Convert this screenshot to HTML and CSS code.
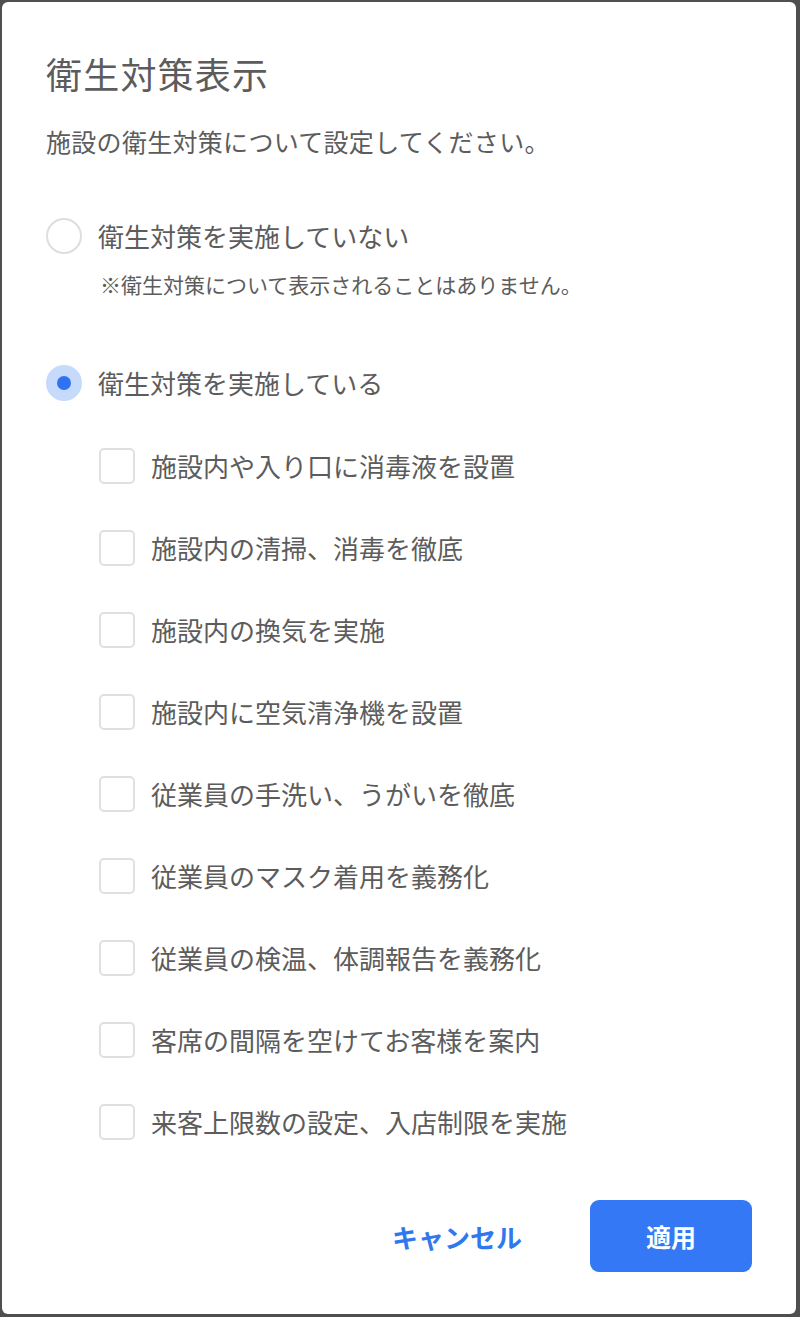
FILE: index.html
```html
<!DOCTYPE html>
<html lang="ja">
<head>
<meta charset="utf-8">
<title>衛生対策表示</title>
<link rel="stylesheet" href="styles.css">
</head>
<body>
<div class="dialog">
  <h1 class="title">衛生対策表示</h1>
  <p class="subtitle">施設の衛生対策について設定してください。</p>

  <div class="radio-row">
    <span class="radio"></span>
    <span class="label">衛生対策を実施していない</span>
  </div>
  <p class="note">※衛生対策について表示されることはありません。</p>

  <div class="radio-row radio-row-2">
    <span class="radio checked"><span class="dot"></span></span>
    <span class="label">衛生対策を実施している</span>
  </div>

  <ul class="checks">
    <li class="check-row"><span class="box"></span><span class="label">施設内や入り口に消毒液を設置</span></li>
    <li class="check-row"><span class="box"></span><span class="label">施設内の清掃、消毒を徹底</span></li>
    <li class="check-row"><span class="box"></span><span class="label">施設内の換気を実施</span></li>
    <li class="check-row"><span class="box"></span><span class="label">施設内に空気清浄機を設置</span></li>
    <li class="check-row"><span class="box"></span><span class="label">従業員の手洗い、うがいを徹底</span></li>
    <li class="check-row"><span class="box"></span><span class="label">従業員のマスク着用を義務化</span></li>
    <li class="check-row"><span class="box"></span><span class="label">従業員の検温、体調報告を義務化</span></li>
    <li class="check-row"><span class="box"></span><span class="label">客席の間隔を空けてお客様を案内</span></li>
    <li class="check-row"><span class="box"></span><span class="label">来客上限数の設定、入店制限を実施</span></li>
  </ul>

  <div class="actions">
    <button class="btn-cancel">キャンセル</button>
    <button class="btn-apply">適用</button>
  </div>
</div>
</body>
</html>
```

FILE: styles.css
```css
* { box-sizing: border-box; }
html, body {
  margin: 0;
  padding: 0;
  background: #4f4f4f;
}
body {
  font-family: "Noto Sans CJK JP", "Noto Sans", sans-serif;
  color: #5c5c5c;
}
.dialog {
  margin: 2px;
  width: 794px;
  height: 1312px;
  background: #ffffff;
  border-radius: 6px;
  padding: 49px 44px 0 44px;
}
.title {
  margin: 0;
  font-size: 36px;
  line-height: 44px;
  font-weight: 400;
  letter-spacing: 1.2px;
}
.subtitle {
  margin: 28px 0 0 0;
  font-size: 25px;
  line-height: 36px;
  letter-spacing: 0.3px;
}
.radio-row {
  display: flex;
  align-items: center;
  gap: 16px;
  height: 36px;
  margin-top: 59px;
}
.radio-row-2 {
  margin-top: 66px;
}
.radio {
  width: 36px;
  height: 36px;
  flex: none;
  border-radius: 50%;
  border: 2px solid #dedede;
  display: flex;
  align-items: center;
  justify-content: center;
}
.radio.checked {
  border: none;
  background: #c6dafc;
}
.dot {
  width: 14px;
  height: 14px;
  border-radius: 50%;
  background: #2f72f2;
}
.label {
  font-size: 26px;
  line-height: 36px;
}
.note {
  margin: 15px 0 0 54px;
  font-size: 21px;
  line-height: 30px;
}
.checks {
  list-style: none;
  margin: 47px 0 0 53px;
  padding: 0;
  display: flex;
  flex-direction: column;
  gap: 46px;
}
.check-row {
  display: flex;
  align-items: center;
  gap: 16px;
  height: 36px;
}
.box {
  width: 36px;
  height: 36px;
  flex: none;
  border: 2px solid #e0e0e0;
  border-radius: 5px;
}
.actions {
  display: flex;
  justify-content: flex-end;
  align-items: center;
  gap: 34px;
  margin-top: 60px;
}
.btn-cancel {
  font-family: inherit;
  background: none;
  border: none;
  color: #3078ee;
  font-size: 26px;
  font-weight: 700;
  height: 72px;
  padding: 0 34px;
}
.btn-apply {
  font-family: inherit;
  width: 162px;
  height: 72px;
  border: none;
  border-radius: 9px;
  background: #3478f6;
  color: #ffffff;
  font-size: 25px;
  font-weight: 700;
}
```
